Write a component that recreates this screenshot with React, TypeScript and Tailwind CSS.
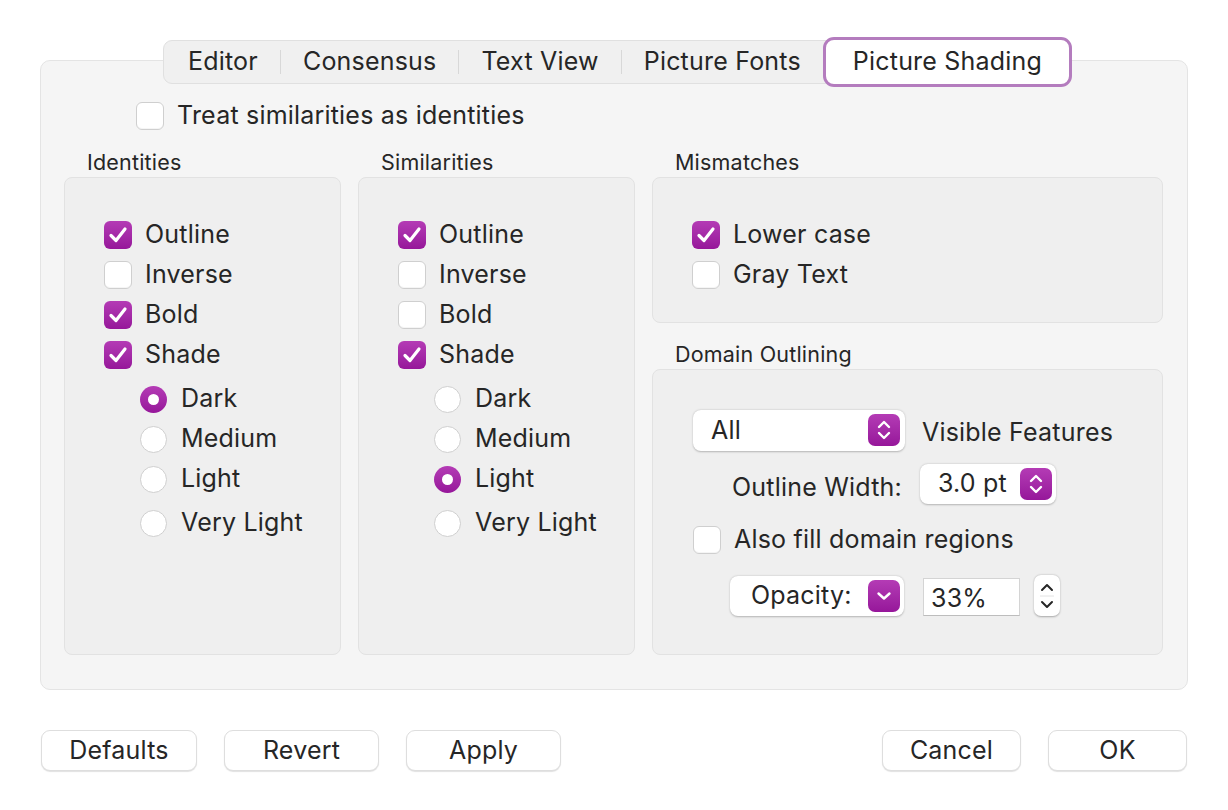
import React from "react";

const PURPLE = "bg-gradient-to-b from-[#b43bb5] to-[#96169a]";

function Check({ on, className = "" }: { on?: boolean; className?: string }) {
  return on ? (
    <span className={`w-[28px] h-[28px] rounded-[6px] ${PURPLE} flex items-center justify-center shrink-0 ${className}`}>
      <svg width="20" height="18" viewBox="0 0 20 18">
        <path d="M3 9.5 L8 14.5 L17 3" fill="none" stroke="white" strokeWidth="3.2" strokeLinecap="round" strokeLinejoin="round" />
      </svg>
    </span>
  ) : (
    <span className={`w-[28px] h-[28px] rounded-[6px] bg-white border border-[#cfcfcf] shadow-[inset_0_-1px_0_rgba(0,0,0,0.04)] shrink-0 ${className}`} />
  );
}

function Radio({ on }: { on?: boolean }) {
  return on ? (
    <span className={`w-[27px] h-[27px] rounded-full ${PURPLE} flex items-center justify-center shrink-0`}>
      <span className="w-[11px] h-[11px] rounded-full bg-white" />
    </span>
  ) : (
    <span className="w-[27px] h-[27px] rounded-full bg-white border border-[#cfcfcf] shrink-0" />
  );
}

function CheckRow({ label, on }: { label: string; on?: boolean }) {
  return (
    <div className="h-[40px] flex items-center gap-[13px]">
      <Check on={on} />
      <span>{label}</span>
    </div>
  );
}

function RadioRow({ label, on, tall }: { label: string; on?: boolean; tall?: boolean }) {
  return (
    <div className={`${tall ? "h-[44px] pt-[4px]" : "h-[40px]"} flex items-center gap-[14px] pl-[36px]`}>
      <Radio on={on} />
      <span>{label}</span>
    </div>
  );
}

function Stepper({ down }: { down?: boolean }) {
  return (
    <span className={`w-[32px] h-[32px] rounded-[7px] ${PURPLE} flex items-center justify-center shrink-0`}>
      {down ? (
        <svg width="18" height="18" viewBox="0 0 18 18">
          <path d="M3.5 6.5 L9 11.5 L14.5 6.5" fill="none" stroke="white" strokeWidth="2.4" strokeLinecap="round" strokeLinejoin="round" />
        </svg>
      ) : (
        <svg width="18" height="26" viewBox="0 0 18 26">
          <path d="M4 10 L9 5 L14 10 M4 16 L9 21 L14 16" fill="none" stroke="white" strokeWidth="2.4" strokeLinecap="round" strokeLinejoin="round" />
        </svg>
      )}
    </span>
  );
}

function Button({ label, w }: { label: string; w: string }) {
  return (
    <button className={`${w} h-[41px] rounded-[9px] bg-white border border-[#dedede] shadow-[0_1px_1px_rgba(0,0,0,0.12)] text-[25px] text-[#262626] flex items-center justify-center`}>
      {label}
    </button>
  );
}

const TABS = ["Editor", "Consensus", "Text View", "Picture Fonts"];

export default function App() {
  return (
    <div
      className="w-[1228px] h-[810px] bg-white text-[#262626] text-[25px] tracking-[0.2px] overflow-hidden"
      style={{ fontFamily: "Inter, 'Noto Sans', sans-serif" }}
    >
      <div className="pt-[60px] px-[40px]">
        {/* Tab box */}
        <div className="w-[1148px] h-[630px] rounded-[10px] bg-[#f5f5f5] border border-[#e4e4e4] px-[23px]">
          {/* Segmented tabs */}
          <div className="flex -mt-[21px] ml-[99px]">
            <div className="h-[44px] flex items-center rounded-[9px] bg-[#f0f0f0] border border-[#e0e0e0] pl-[2px]">
              {TABS.map((t) => (
                <React.Fragment key={t}>
                  <span className="px-[22px] mt-[-2px] leading-none">{t}</span>
                  <span className="w-px h-[24px] bg-[#d8d8d8]" />
                </React.Fragment>
              ))}
              <span className="h-[50px] px-[27px] ml-[-1px] -mr-[3px] flex items-center rounded-[11px] bg-white border-[3px] border-[#b47cbe] leading-none">
                <span className="mt-[-2px]">Picture Shading</span>
              </span>
            </div>
          </div>

          {/* Treat similarities row */}
          <div className="mt-[18px] ml-[72px] h-[28px] flex items-center gap-[13px]">
            <Check />
            <span>Treat similarities as identities</span>
          </div>

          <div className="flex gap-[17px] mt-[18px]">
            {/* Identities */}
            <div className="w-[277px]">
              <div className="h-[28px] pl-[23px] flex items-center text-[21.5px]">Identities</div>
              <div className="mt-[1px] h-[478px] rounded-[8px] bg-[#efefef] border border-[#e2e2e2] pt-[37px] pl-[39px]">
                <CheckRow label="Outline" on />
                <CheckRow label="Inverse" />
                <CheckRow label="Bold" on />
                <CheckRow label="Shade" on />
                <div className="pt-[4px]">
                  <RadioRow label="Dark" on />
                  <RadioRow label="Medium" />
                  <RadioRow label="Light" />
                  <RadioRow label="Very Light" tall />
                </div>
              </div>
            </div>

            {/* Similarities */}
            <div className="w-[277px]">
              <div className="h-[28px] pl-[23px] flex items-center text-[21.5px]">Similarities</div>
              <div className="mt-[1px] h-[478px] rounded-[8px] bg-[#efefef] border border-[#e2e2e2] pt-[37px] pl-[39px]">
                <CheckRow label="Outline" on />
                <CheckRow label="Inverse" />
                <CheckRow label="Bold" />
                <CheckRow label="Shade" on />
                <div className="pt-[4px]">
                  <RadioRow label="Dark" />
                  <RadioRow label="Medium" />
                  <RadioRow label="Light" on />
                  <RadioRow label="Very Light" tall />
                </div>
              </div>
            </div>

            {/* Right column */}
            <div className="w-[511px]">
              <div className="h-[28px] pl-[23px] flex items-center text-[21.5px]">Mismatches</div>
              <div className="mt-[1px] h-[146px] rounded-[8px] bg-[#efefef] border border-[#e2e2e2] pt-[37px] pl-[39px]">
                <CheckRow label="Lower case" on />
                <CheckRow label="Gray Text" />
              </div>

              <div className="mt-[17px] h-[28px] pl-[23px] flex items-center text-[21.5px]">Domain Outlining</div>
              <div className="mt-[1px] h-[286px] rounded-[8px] bg-[#efefef] border border-[#e2e2e2] pt-[39px] pl-[40px]">
                <div className="flex items-center">
                  <div className="w-[212px] h-[41px] rounded-[8px] bg-white shadow-[0_0.5px_2px_rgba(0,0,0,0.25)] flex items-center pl-[18px] pr-[5px]">
                    <span className="flex-1">All</span>
                    <Stepper />
                  </div>
                  <span className="ml-[17px] mt-[5px]">Visible Features</span>
                </div>

                <div className="flex items-center mt-[10px] pl-[39px]">
                  <span className="mt-[7px]">Outline Width:</span>
                  <div className="ml-[18px] w-[136px] h-[40px] rounded-[8px] bg-white shadow-[0_0.5px_2px_rgba(0,0,0,0.25)] flex items-center pl-[18px] pr-[4px]">
                    <span className="flex-1">3.0 pt</span>
                    <Stepper />
                  </div>
                </div>

                <div className="mt-[20px] h-[28px] flex items-center gap-[13px]">
                  <Check />
                  <span>Also fill domain regions</span>
                </div>

                <div className="mt-[21px] flex items-center pl-[37px]">
                  <div className="w-[174px] h-[40px] rounded-[8px] bg-white shadow-[0_0.5px_2px_rgba(0,0,0,0.25)] flex items-center pl-[21px] pr-[4px]">
                    <span className="flex-1">Opacity:</span>
                    <Stepper down />
                  </div>
                  <div className="ml-[19px] w-[97px] h-[38px] mt-[2px] bg-white border border-[#d4d4d4] border-b-[#bdbdbd] flex items-center pl-[7px]">
                    <span className="mt-[4px]">33%</span>
                  </div>
                  <div className="ml-[14px] w-[26px] h-[41px] rounded-[7px] bg-white shadow-[0_0.5px_2px_rgba(0,0,0,0.3)] flex flex-col items-center justify-center">
                    <svg width="16" height="34" viewBox="0 0 16 34">
                      <path d="M3 11 L8 6 L13 11 M3 23 L8 28 L13 23" fill="none" stroke="#262626" strokeWidth="2" strokeLinecap="round" strokeLinejoin="round" />
                      <path d="M1 17 H15" stroke="#e2e2e2" strokeWidth="1" />
                    </svg>
                  </div>
                </div>
              </div>
            </div>
          </div>
        </div>

        {/* Bottom buttons */}
        <div className="mt-[40px] flex items-center">
          <div className="flex gap-[27px] pl-[1px]">
            <Button label="Defaults" w="w-[156px]" />
            <Button label="Revert" w="w-[155px]" />
            <Button label="Apply" w="w-[155px]" />
          </div>
          <div className="ml-auto flex gap-[27px] pr-[1px]">
            <Button label="Cancel" w="w-[139px]" />
            <Button label="OK" w="w-[139px]" />
          </div>
        </div>
      </div>
    </div>
  );
}
